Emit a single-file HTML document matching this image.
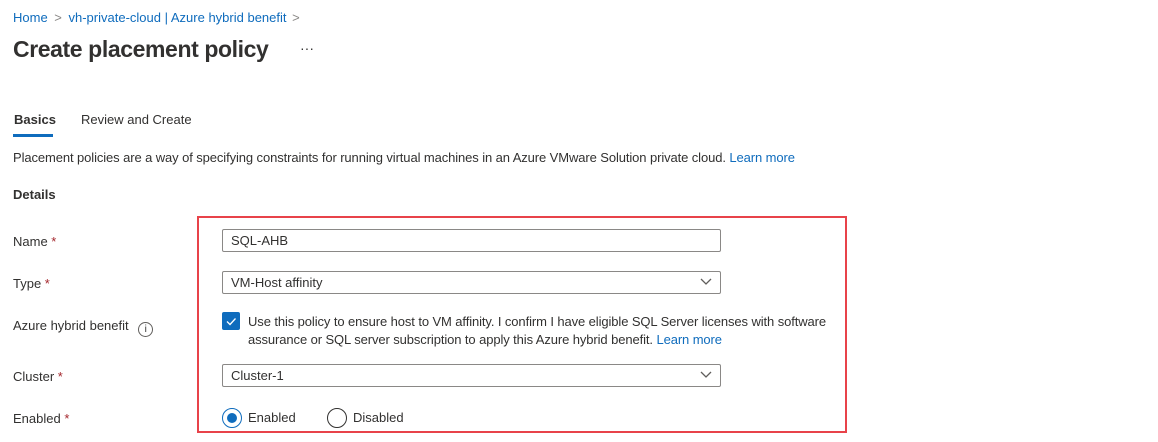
<!DOCTYPE html>
<html><head><style>
body{margin:0;width:1158px;height:442px;background:#fff;font-family:"Segoe UI","Liberation Sans",sans-serif;color:#323130;position:relative;overflow:hidden}
.a{position:absolute;white-space:nowrap}
.lk{color:#0f6cbd}
.in{position:absolute;left:222px;width:489px;height:21px;border:1px solid #8a8886;border-radius:2px;font-size:13px;line-height:21px;padding-left:8px;box-sizing:content-box}
.lab{position:absolute;left:13px;font-size:13px}
.req{color:#a4262c}
.chev{position:absolute;right:8px;top:6px}
</style></head><body>
<div class="a lk" style="left:13px;top:10px;font-size:13px">Home <span style="color:#8a8886;margin:0 3px">&gt;</span> vh-private-cloud | Azure hybrid benefit <span style="color:#8a8886;margin-left:2px">&gt;</span></div>
<div class="a" style="left:13px;top:36px;font-size:23px;font-weight:600;letter-spacing:-0.4px">Create placement policy</div>
<div class="a" style="left:300px;top:40px;font-size:14px">···</div>
<div class="a" style="left:14px;top:112px;font-size:13px;font-weight:600">Basics</div>
<div class="a" style="left:13px;top:134px;width:40px;height:3px;background:#0f6cbd"></div>
<div class="a" style="left:81px;top:112px;font-size:13px">Review and Create</div>
<div class="a" style="left:13px;top:150px;font-size:13px;letter-spacing:-0.1px">Placement policies are a way of specifying constraints for running virtual machines in an Azure VMware Solution private cloud. <span class="lk">Learn more</span></div>
<div class="a" style="left:13px;top:187px;font-size:13px;font-weight:600">Details</div>
<div class="lab" style="top:234px">Name <span class="req">*</span></div>
<div class="lab" style="top:276px">Type <span class="req">*</span></div>
<div class="lab" style="top:318px">Azure hybrid benefit <span style="display:inline-block;width:13px;height:13px;border:1px solid #605e5c;border-radius:50%;font-size:10px;line-height:13px;text-align:center;margin-left:6px;vertical-align:-2px">i</span></div>
<div class="lab" style="top:369px">Cluster <span class="req">*</span></div>
<div class="lab" style="top:411px">Enabled <span class="req">*</span></div>
<div class="a" style="left:197px;top:216px;width:646px;height:213px;border:2.5px solid #e8434a"></div>
<div class="in" style="top:229px">SQL-AHB</div>
<div class="in" style="top:271px">VM-Host affinity<svg class="chev" width="12" height="8"><path d="M1 1l5 5 5-5" stroke="#605e5c" fill="none" stroke-width="1.3"/></svg></div>
<div class="a" style="left:222px;top:312px;width:18px;height:18px;background:#0f6cbd;border-radius:2px"><svg width="18" height="18"><path d="M5 9.5l3 3 5.5-6" stroke="#fff" fill="none" stroke-width="1.3"/></svg></div>
<div class="a" style="left:248px;top:313px;font-size:13px;line-height:18px;white-space:normal;width:600px;letter-spacing:-0.1px">Use this policy to ensure host to VM affinity. I confirm I have eligible SQL Server licenses with software assurance or SQL server subscription to apply this Azure hybrid benefit. <span class="lk">Learn more</span></div>
<div class="in" style="top:364px">Cluster-1<svg class="chev" width="12" height="8"><path d="M1 1l5 5 5-5" stroke="#605e5c" fill="none" stroke-width="1.3"/></svg></div>
<div class="a" style="left:222px;top:408px;width:18px;height:18px;border:1px solid #0f6cbd;border-radius:50%"><div style="position:absolute;left:4px;top:4px;width:10px;height:10px;border-radius:50%;background:#0f6cbd"></div></div>
<div class="a" style="left:248px;top:410px;font-size:13px">Enabled</div>
<div class="a" style="left:327px;top:408px;width:18px;height:18px;border:1px solid #323130;border-radius:50%"></div>
<div class="a" style="left:353px;top:410px;font-size:13px">Disabled</div>
</body></html>
